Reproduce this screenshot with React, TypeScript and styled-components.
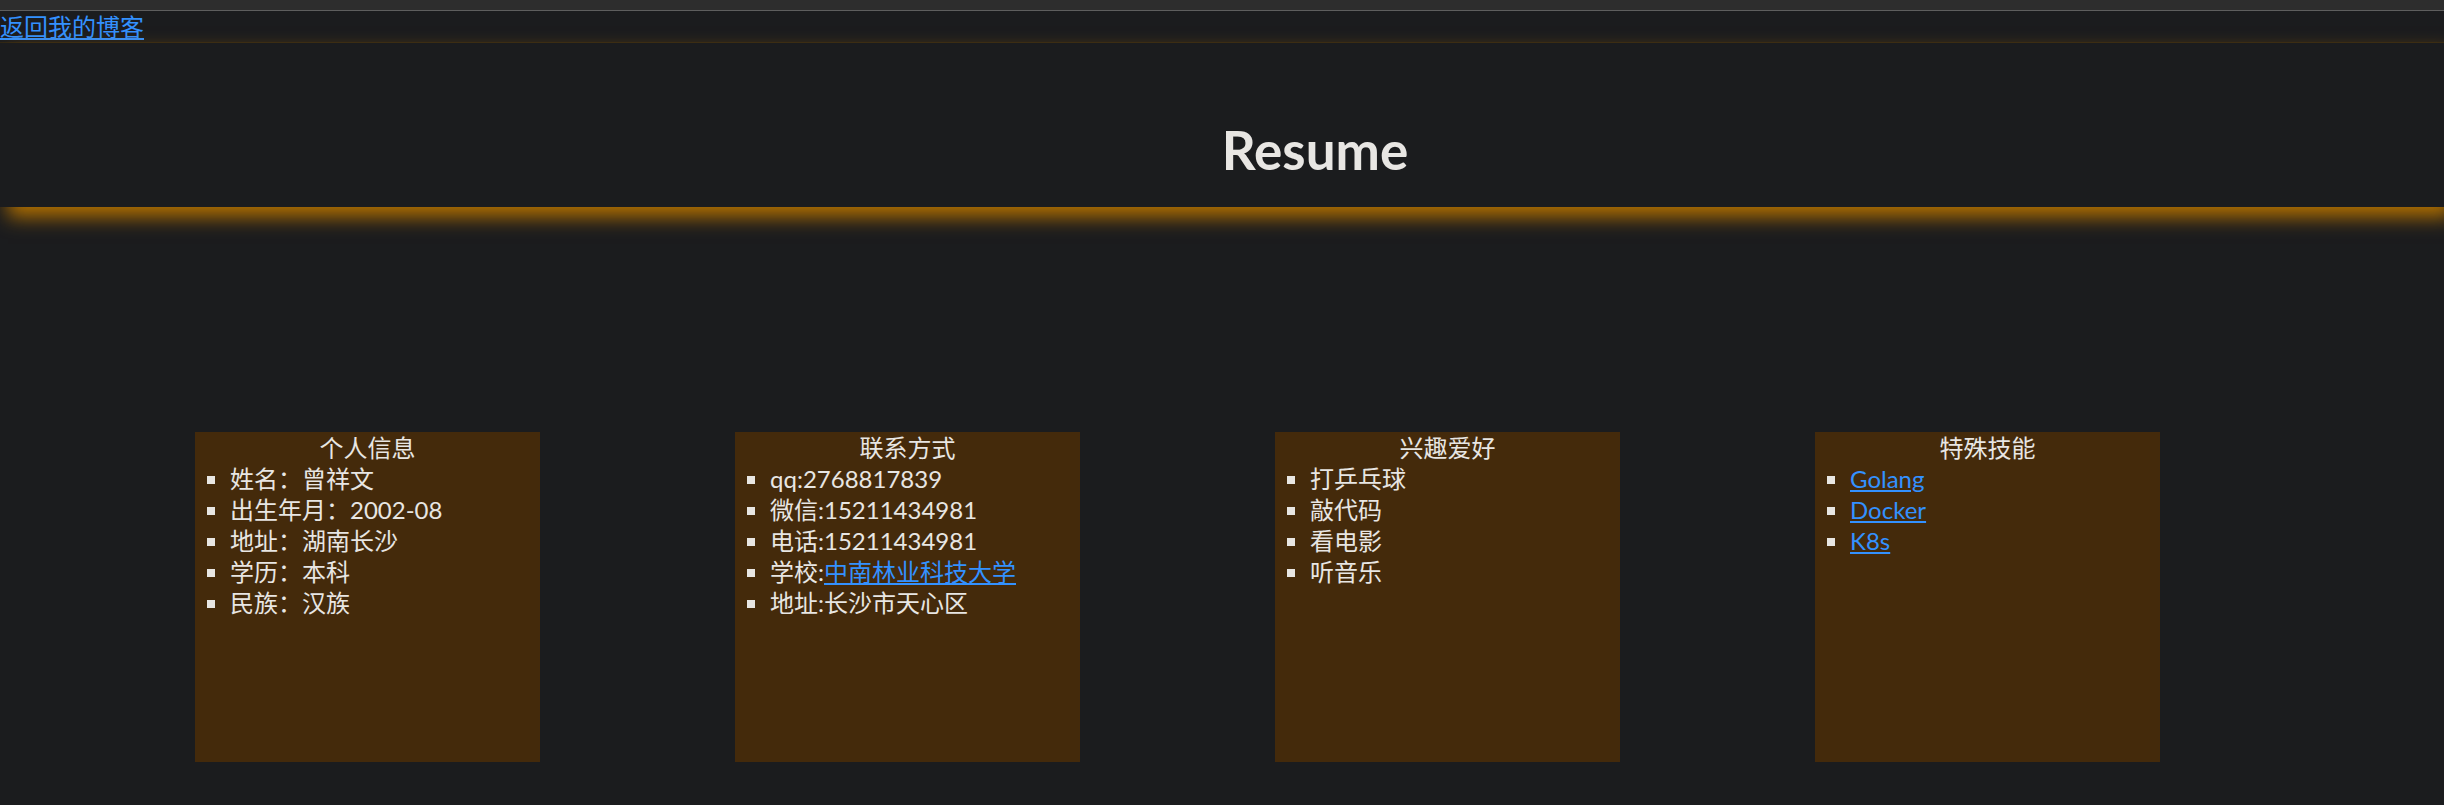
import React from "react";
import styled, { createGlobalStyle } from "styled-components";

const GlobalStyle = createGlobalStyle`
  html, body {
    margin: 0;
    padding: 0;
    background: #1b1c1e;
    color: #e8e6e3;
    font-family: Lato, "Noto Sans CJK SC", sans-serif;
  }
  #root {
    min-height: 805px;
  }
`;

const TopStrip = styled.div`
  height: 10px;
  background: #2d2d2d;
  border-bottom: 1px solid #5e5e5e;
`;

const Nav = styled.nav`
  font-size: 24px;
  line-height: 31px;
  border-bottom: 1px solid #2b2416;
`;

const BlueLink = styled.a`
  color: #3391ff;
  text-decoration: underline;
`;

const Header = styled.header`
  padding: 75px 0 25px 186px;
  box-shadow: 8px 10px 18px #b06f00;
  background: #1b1c1e;
  position: relative;
`;

const Title = styled.h1`
  margin: 0;
  text-align: center;
  font-size: 53px;
  line-height: 63.6px;
  font-weight: 700;
  color: #e8e6e3;
`;

const Cards = styled.section`
  display: flex;
  gap: 195px;
  padding: 225px 0 0 195px;
`;

const Card = styled.div`
  width: 345px;
  height: 330px;
  background: #442a0b;
  font-size: 24px;
  line-height: 31.2px;
`;

const CardTitle = styled.div`
  text-align: center;
  line-height: 31px;
`;

const List = styled.ul`
  margin: 0;
  padding-left: 35px;
  list-style: square;
`;

type Item = { text: string; link?: string };

const cards: { title: string; items: Item[] }[] = [
  {
    title: "个人信息",
    items: [
      { text: "姓名：曾祥文" },
      { text: "出生年月：2002-08" },
      { text: "地址：湖南长沙" },
      { text: "学历：本科" },
      { text: "民族：汉族" },
    ],
  },
  {
    title: "联系方式",
    items: [
      { text: "qq:2768817839" },
      { text: "微信:15211434981" },
      { text: "电话:15211434981" },
      { text: "学校:", link: "中南林业科技大学" },
      { text: "地址:长沙市天心区" },
    ],
  },
  {
    title: "兴趣爱好",
    items: [
      { text: "打乒乓球" },
      { text: "敲代码" },
      { text: "看电影" },
      { text: "听音乐" },
    ],
  },
  {
    title: "特殊技能",
    items: [
      { text: "", link: "Golang" },
      { text: "", link: "Docker" },
      { text: "", link: "K8s" },
    ],
  },
];

export default function App() {
  return (
    <>
      <GlobalStyle />
      <TopStrip />
      <Nav>
        <BlueLink href="#">返回我的博客</BlueLink>
      </Nav>
      <Header>
        <Title>Resume</Title>
      </Header>
      <Cards>
        {cards.map((card) => (
          <Card key={card.title}>
            <CardTitle>{card.title}</CardTitle>
            <List>
              {card.items.map((item, i) => (
                <li key={i}>
                  {item.text}
                  {item.link && <BlueLink href="#">{item.link}</BlueLink>}
                </li>
              ))}
            </List>
          </Card>
        ))}
      </Cards>
    </>
  );
}
